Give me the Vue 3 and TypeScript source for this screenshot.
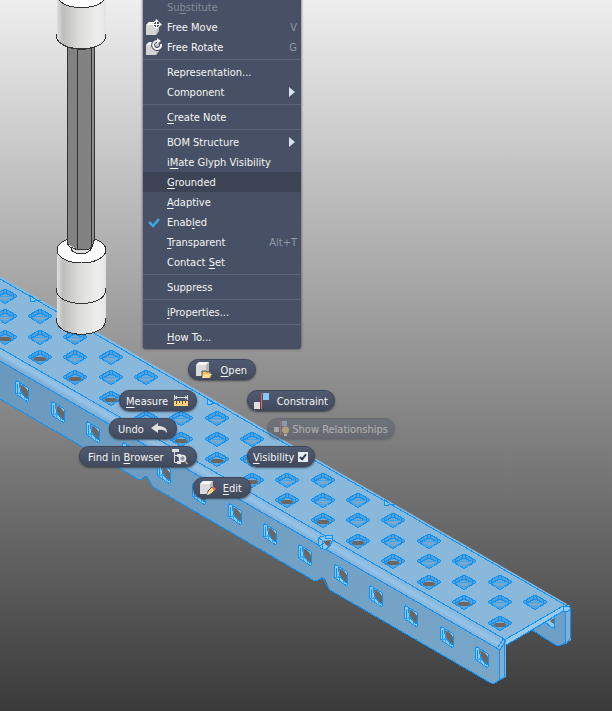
<script setup lang="ts">
import { ref } from 'vue'

interface MenuEntry {
  id: string
  label: [string, string, string]
  shortcut?: string
  icon?: 'move' | 'rotate' | 'check'
  submenu?: boolean
  disabled?: boolean
}

interface Point {
  x: number
  y: number
  open?: boolean
}

const groups: MenuEntry[][] = [
  [
    { id: 'substitute', label: ['Su', 'b', 'stitute'], disabled: true },
    { id: 'move', label: ['Free Move', '', ''], shortcut: 'V', icon: 'move' },
    { id: 'rotate', label: ['Free Rotate', '', ''], shortcut: 'G', icon: 'rotate' },
  ],
  [
    { id: 'representation', label: ['Representation...', '', ''] },
    { id: 'component', label: ['Component', '', ''], submenu: true },
  ],
  [{ id: 'note', label: ['', 'C', 'reate Note'] }],
  [
    { id: 'bom', label: ['BOM Structure', '', ''], submenu: true },
    { id: 'imate', label: ['i', 'M', 'ate Glyph Visibility'] },
    { id: 'grounded', label: ['', 'G', 'rounded'] },
    { id: 'adaptive', label: ['', 'A', 'daptive'] },
    { id: 'enabled', label: ['Enab', 'l', 'ed'], icon: 'check' },
    { id: 'transparent', label: ['', 'T', 'ransparent'], shortcut: 'Alt+T' },
    { id: 'contact', label: ['Contact ', 'S', 'et'] },
  ],
  [{ id: 'suppress', label: ['Suppress', '', ''] }],
  [{ id: 'iproperties', label: ['', 'i', 'Properties...'] }],
  [{ id: 'howto', label: ['', 'H', 'ow To...'] }],
]

const active = ref('grounded')
const visible = ref(true)

// Hole lattice of the channel: one step along its length is (35.35, 20.43).
const topHoles: Point[] = [{ x: 535, y: 602 }]
const sideHoles: Point[] = []
for (let k = 0; k < 15; k++) {
  for (let r = 0; r < 3; r++) {
    topHoles.push({
      x: Math.round(499.5 - 35.35 * k),
      y: Math.round(581.7 - 20.43 * k + 20.43 * r),
      open: r === 2,
    })
  }
  sideHoles.push({ x: Math.round(482 - 35.35 * k), y: Math.round(657 - 20.43 * k) })
}
const edgeMarks: Point[] = [{ x: 33, y: 299 }, { x: 210, y: 402 }, { x: 387, y: 503 }]
</script>

<template>
  <main class="viewport">
    <svg class="model" viewBox="0 0 612 711" preserveAspectRatio="xMinYMin slice" aria-hidden="true">
      <defs>
        <linearGradient id="metal">
          <stop offset="0" stop-color="#dededc" />
          <stop offset="0.12" stop-color="#bdbdbb" />
          <stop offset="0.5" stop-color="#dfdfdd" />
          <stop offset="0.85" stop-color="#eeeeee" />
          <stop offset="1" stop-color="#e2e2e2" />
        </linearGradient>
        <linearGradient id="bend" gradientUnits="userSpaceOnUse" x1="200" y1="464" x2="193" y2="476">
          <stop offset="0" stop-color="#8ab8da" />
          <stop offset="0.35" stop-color="#96c4e8" />
          <stop offset="1" stop-color="#719fc3" />
        </linearGradient>
        <linearGradient id="flange" gradientUnits="userSpaceOnUse" x1="0" y1="360" x2="500" y2="680">
          <stop offset="0" stop-color="#6b99bd" />
          <stop offset="1" stop-color="#78a6c9" />
        </linearGradient>
        <g id="top-hole">
          <path class="pit" d="M-11.500 -0.500L-8.500 -2.500L-4.500 -4.500L-1.500 -6.500H1.500L4.500 -4.500L8.500 -2.500L11.500 -0.500V0.500L8.500 2.500L4.500 4.500L0.500 7.500H-0.500L-4.500 4.500L-8.500 2.500L-11.500 0.500Z" />
          <path class="lip" d="M-7.500 0.500L-2.500 -1.500H2.500L7.500 0.500L4.500 3.500L0.500 4.500L-4.500 3.500Z" />
          <path class="line" d="M-8.500 -2.500V2.500M8.500 -2.500V2.500M-1.500 -6.500V-2.500H1.500V-6.500M-1.500 -2.500L-7.500 0.500M1.500 -2.500L7.500 0.500" />
          <path class="line faint" d="M-6.500 0.500H6.500M-5.500 3.500L-1.500 5.500M5.500 3.500L1.500 5.500" />
        </g>
        <g id="side-hole">
          <path class="rim" d="M-6.500 -8.500L-5.500 -10.500L-2.500 -8.500L5.500 -3.500L6.500 -2.500V9.500L5.500 10.500L3.500 9.500L-5.500 3.500L-6.500 1.500Z" />
          <path class="void" d="M-2 -7L3 -4L6 0V8L3 6L-1 0Z" />
          <path class="line" d="M-2.500 -8.500V-6.500L-1.500 0.500L2.500 5.500L6.500 8.500M-4.500 -7.500V2.500" />
          <path class="line faint" d="M-5.500 3.500L-1.500 1.500V5.500M2.500 5.500V8.500" />
        </g>
      </defs>

      <path fill="url(#flange)" d="M0 360L500 649V680L493 684L330 590L325 579L322 577L318 580L313 580L153 487L148 477L145 476L142 479L138 479L0 399Z" />
      <path fill="#8ab8da" d="M0 276L567 604L563 608L506 641L0 348Z" />
      <path fill="url(#bend)" d="M0 347L506 639L500 650L0 361Z" />
      <path fill="#6e9fc5" d="M532 630L563 611L571 609V640L558 646Z" />
      <path fill="#80afd4" d="M566 612L571 609V640L566 643ZM500 650L506 640V677L500 680Z" />
      <path fill="#9bc9ec" d="M563 606L569 605L571 609L568 611H563ZM506 639L563 606V611L506 645Z" />

      <g class="edges">
        <path d="M0 279L567 606M0 348L506 640M0 361L500 650" />
        <path d="M0 399L138 479H142L146 476L149 481L153 487L313 580H318L323 578L326 584L330 590L489 682L493 684L500 680L504.500 677V640L563 606H569L570.500 609V638L567 643L558 646L554 644L532 630" />
        <path d="M499.500 650V680M500 650L506 640M506 645L532 630L563 611V606M565.500 612V643M563 611H568L571 609M498 647L504 638" />
      </g>

      <use v-for="(h, i) in topHoles" :key="'t' + i" href="#top-hole" :x="h.x" :y="h.y" />
      <template v-for="(h, i) in topHoles" :key="'o' + i">
        <path v-if="h.open" class="void" :transform="`translate(${h.x} ${h.y})`" d="M-7 2L-4 0H4L7 2L4 4H-4Z" />
      </template>
      <use v-for="(h, i) in sideHoles" :key="'s' + i" href="#side-hole" :x="h.x" :y="h.y" />
      <path class="rim" d="M545 622L551 619L554 616V628L551 627Z" />
      <path class="void" d="M550 621L554 618V624Z" />
      <path v-for="m in edgeMarks" :key="m.x" class="mark" :transform="`translate(${m.x} ${m.y})`" d="M-2.500 -3.500V2.500H1.500L2.500 0.500ZM2 1.500H8" />
      <path class="rim" d="M318.500 537.500L325.500 535.500H332.500V540.500L329.500 546.500L325.500 549.500L320.500 548.500L318.500 543.500Z" />
      <path class="void" d="M323 541L331 540L329 547L325 544Z" />
      <path class="line" d="M318.500 537.500L322.500 540.500V548.500M325.500 535.500V538.500H332.500M319.500 545.500L324.500 543.500" />

      <g class="metal">
        <path fill="url(#metal)" d="M57 -8V36C57 53 106 53 106 36V-8Z" />
        <path fill="#ffffff" d="M59 0C67 10 96 10 104 0Z" />
        <path class="ink" d="M59 0C67 10 96 10 104 0M56.500 34V36C57 53 106 53 105.500 36V34" />
        <path fill="url(#metal)" d="M57 249V320C57 339 106 339 106 320V249Z" />
        <ellipse class="ink" cx="81.500" cy="250" rx="24.500" ry="13" fill="#ffffff" />
        <path class="ink" d="M56.500 288V290C57 308 106 308 105.500 290V288M56.500 318V320C57 339 106 339 105.500 320V318" />
        <path fill="#dddddd" class="ink" d="M71 248C72 256 90 256 92 247" />
        <path fill="#828282" d="M67 47C76 50 88 50 95 47V238L91 247L88 249H77L67 244Z" />
        <path fill="#8c8c8c" d="M92 49L94 48V239L92 243Z" />
        <path class="ink" d="M67.500 47V244L70 247L77 249.500H88L92 247L94.500 239V47M77.500 49V250M91.500 48V247M67 47C76 50 88 50 95 47" />
      </g>
    </svg>

    <nav class="menu" aria-label="Component commands">
      <ul v-for="(group, g) in groups" :key="g" class="group">
        <li v-for="item in group" :key="item.id">
          <button
            type="button"
            class="item"
            :class="{ active: active === item.id }"
            :disabled="item.disabled"
            @mouseenter="active = item.id"
          >
            <span class="gutter">
              <svg v-if="item.icon === 'check'" width="16" height="16" viewBox="0 0 16 16">
                <path d="M4 8L8 12L14 5" fill="none" stroke="#3aa9e0" stroke-width="2.500" />
              </svg>
              <svg v-else-if="item.icon" width="18" height="18" viewBox="0 0 18 18">
                <path d="M1 7L4 4H12L14 7V13L11 17H1Z" fill="#d4d4d2" />
                <path d="M1 7L4 4H13L11 7Z" fill="#f5f5f3" />
                <path d="M11 7L14 5V13L11 17Z" fill="#bebebc" />
                <template v-if="item.icon === 'move'">
                  <path d="M11.500 2V11M7 6.500H16" class="halo" />
                  <path d="M11.500 2V11M7 6.500H16" class="glyph" />
                  <path d="M11.500 1L14 4H9ZM11.500 12L14 9H9ZM6 6.500L9 4V9ZM17 6.500L14 4V9Z" fill="#f5f5f5" />
                </template>
                <template v-else>
                  <path d="M16 6A4 4 0 1 1 12 3" class="halo wide" />
                  <path d="M16 6A4 4 0 1 1 12 3" class="glyph bold" />
                  <path d="M12 0L16 3L12 6Z" fill="#f5f5f5" />
                </template>
              </svg>
            </span>
            <span class="label">{{ item.label[0] }}<u v-if="item.label[1]">{{ item.label[1] }}</u>{{ item.label[2] }}</span>
            <span v-if="item.shortcut" class="shortcut">{{ item.shortcut }}</span>
            <svg v-if="item.submenu" class="arrow" width="6" height="10" viewBox="0 0 6 10"><path d="M0 0L6 5L0 10Z" fill="#d5e2f3" /></svg>
          </button>
        </li>
      </ul>
    </nav>

    <button type="button" class="pill open">
      <svg width="18" height="18" viewBox="0 0 18 18">
        <path d="M1 4L4 1H14V11L11 15H1Z" fill="#dadad8" /><path d="M1 4L4 1H14L11 4Z" fill="#f4f4f2" /><path d="M11 4L14 1V12L11 15Z" fill="#b6b6b4" />
        <path d="M7 10H11L12 11H16V17H7Z" fill="#f2c063" stroke="#4b5468" stroke-width="1" /><path d="M9 13H17L14 17H7Z" fill="#ffdc91" />
      </svg>
      <span><u>O</u>pen</span>
    </button>
    <button type="button" class="pill measure">
      <span><u>M</u>easure</span>
      <svg width="14" height="12" viewBox="0 0 14 12">
        <path d="M0.500 0V5M13.500 0V5M1 2.500H13M3 1L1 2.500L3 4M11 1L13 2.500L11 4" fill="none" stroke="#dddddd" />
        <path d="M0 6H14V11H0Z" fill="#ffd27a" /><path d="M2.500 6V9M5.500 6V8M8.500 6V9M11.500 6V8" stroke="#5a5448" />
      </svg>
    </button>
    <button type="button" class="pill undo">
      <span>Undo</span>
      <svg width="17" height="11" viewBox="0 0 17 11"><path d="M0 5L7 0V3C13 3 16 5 16 10C14 7 12 6 7 7V10Z" fill="#e0e0de" /></svg>
    </button>
    <button type="button" class="pill browser">
      <span>Find in <u>B</u>rowser</span>
      <svg width="16" height="16" viewBox="0 0 16 16">
        <path d="M0 0H7V3H0ZM5 5H9V8H5ZM5 12H9V15H5Z" fill="#dededc" /><path d="M2.500 3V13.500H6M3 6.500H6" fill="none" stroke="#dededc" />
        <circle cx="10.500" cy="9.500" r="3" fill="#8d97a8" stroke="#eeeeee" stroke-width="1.500" /><path d="M12.500 12L15.500 15" stroke="#caa77c" stroke-width="1.500" />
      </svg>
    </button>
    <button type="button" class="pill edit">
      <svg width="16" height="16" viewBox="0 0 16 16">
        <path d="M0 4L3 1H13V11L10 14H0Z" fill="#dadad8" /><path d="M0 4L3 1H13L10 4Z" fill="#f4f4f2" /><path d="M10 4L13 1V11L10 14Z" fill="#b9b9b7" />
        <path d="M7 15L8 11L12 7L15 10L11 14Z" fill="#ffd27a" stroke="#4b5468" /><path d="M12 7L13 6L16 9L14 11Z" fill="#e66b63" /><path d="M7 15L8 12L10 14Z" fill="#f7eee0" />
      </svg>
      <span><u>E</u>dit</span>
    </button>
    <button type="button" class="pill constraint">
      <svg width="16" height="16" viewBox="0 0 16 16"><path d="M0 9H6V16H0Z" fill="#dddddd" /><path d="M7 0H8V16H7Z" fill="#f25c5c" /><path d="M9 0H15V7H9Z" fill="#86c8fa" /></svg>
      <span>Constraint</span>
    </button>
    <button type="button" class="pill relations" disabled>
      <svg width="16" height="16" viewBox="0 0 16 16"><path d="M0 6H5V11H0Z" fill="#dddddd" /><path d="M6 0H7V14H6Z" fill="#ec5b5b" /><path d="M8 0H13V5H8Z" fill="#86c8fa" /><circle cx="11.500" cy="9" r="3.500" fill="#ffd27a" /><path d="M10 13H13V15H10Z" fill="#eeeeee" /></svg>
      <span>Show Relationships</span>
    </button>
    <label class="pill visibility">
      <span><u>V</u>isibility</span>
      <input v-model="visible" type="checkbox" />
    </label>
  </main>
</template>

<style>
body {
  margin: 0;
}
</style>

<style scoped>
.viewport {
  position: relative;
  min-height: 100vh;
  overflow: hidden;
  background: linear-gradient(#eeeeee, #3a3a3a);
  font-family: 'DejaVu Sans Condensed', 'Noto Sans', sans-serif;
  font-size: 11px;
  line-height: 18px;
  color: #f5f5f5;
}
.model {
  position: absolute;
  inset: 0;
  width: 100%;
  height: 100%;
}
.edges path,
.line {
  fill: none;
  stroke: #0a94fb;
  shape-rendering: crispEdges;
}
.line.faint {
  stroke: #3fa4ee;
}
.pit,
.rim,
.mark {
  fill: #5c9fd0;
  stroke: #0a94fb;
  shape-rendering: crispEdges;
}
.rim,
.mark {
  fill: #8fc6ee;
}
.lip {
  fill: #78a9cd;
}
.void {
  fill: #6a6663;
}
.ink {
  stroke: #333333;
  shape-rendering: crispEdges;
}
.ink:not([fill]) {
  fill: none;
}
.menu {
  position: absolute;
  top: -3px;
  left: 143px;
  width: 158px;
  padding-bottom: 2px;
  background: #475064;
  border-radius: 3px;
  box-shadow: 0 0 2px 1px rgba(70, 70, 75, 0.5);
}
.group {
  margin: 0;
  padding: 0;
  list-style: none;
}
.group + .group {
  padding-top: 2px;
  margin-top: 2px;
  border-top: 1px solid #5b6579;
}
.item {
  display: flex;
  align-items: center;
  box-sizing: border-box;
  width: 100%;
  height: 20px;
  padding: 0 4px 0 2px;
  border: 0;
  background: none;
  color: inherit;
  font: inherit;
  text-align: left;
}
.item.active {
  background: #3b4355;
}
.item:disabled {
  color: #858b98;
}
.gutter {
  display: flex;
  width: 22px;
}
.label {
  flex: 1;
  white-space: nowrap;
}
.label,
.shortcut,
.pill span {
  padding-top: 2px;
}
.shortcut {
  color: #9299a6;
}
.arrow {
  margin-right: 2px;
}
.halo {
  fill: none;
  stroke: #475064;
  stroke-width: 3;
}
.halo.wide {
  stroke-width: 4;
}
.glyph {
  fill: none;
  stroke: #f5f5f5;
  stroke-width: 1;
}
.bold {
  stroke-width: 2;
}
u {
  text-underline-offset: 2px;
  text-decoration-thickness: 1px;
}
.pill {
  position: absolute;
  display: flex;
  align-items: center;
  justify-content: space-between;
  box-sizing: border-box;
  height: 21px;
  padding: 0 8px 0 6px;
  border: 1px solid #3e4657;
  border-radius: 10px;
  background: linear-gradient(#505a70, #424a5d);
  box-shadow: 0 1px 2px rgba(50, 55, 65, 0.8);
  color: inherit;
  font: inherit;
  white-space: nowrap;
}
.pill svg,
.pill input {
  flex: none;
}
.open {
  top: 359px;
  left: 188px;
  width: 68px;
}
.measure {
  top: 390px;
  left: 119px;
  width: 78px;
}
.undo {
  top: 418px;
  left: 109px;
  width: 68px;
}
.browser {
  top: 446px;
  left: 79px;
  width: 118px;
}
.edit {
  top: 477px;
  left: 193px;
  width: 58px;
}
.constraint {
  top: 390px;
  left: 247px;
  width: 88px;
}
.relations {
  top: 418px;
  left: 267px;
  width: 128px;
  opacity: 0.4;
}
.undo,
.browser {
  padding-left: 8px;
}
.constraint,
.relations {
  padding-right: 6px;
}
.visibility {
  top: 446px;
  left: 247px;
  width: 68px;
  padding: 0 6px 0 5px;
}
.visibility input {
  appearance: none;
  width: 10px;
  height: 10px;
  margin: 0;
  background: #e8eef7;
}
.visibility input:checked::after {
  content: '';
  display: block;
  box-sizing: border-box;
  width: 4px;
  height: 7px;
  margin: 1px 3px;
  border: solid #333c50;
  border-width: 0 2px 2px 0;
  transform: rotate(40deg);
}
</style>
